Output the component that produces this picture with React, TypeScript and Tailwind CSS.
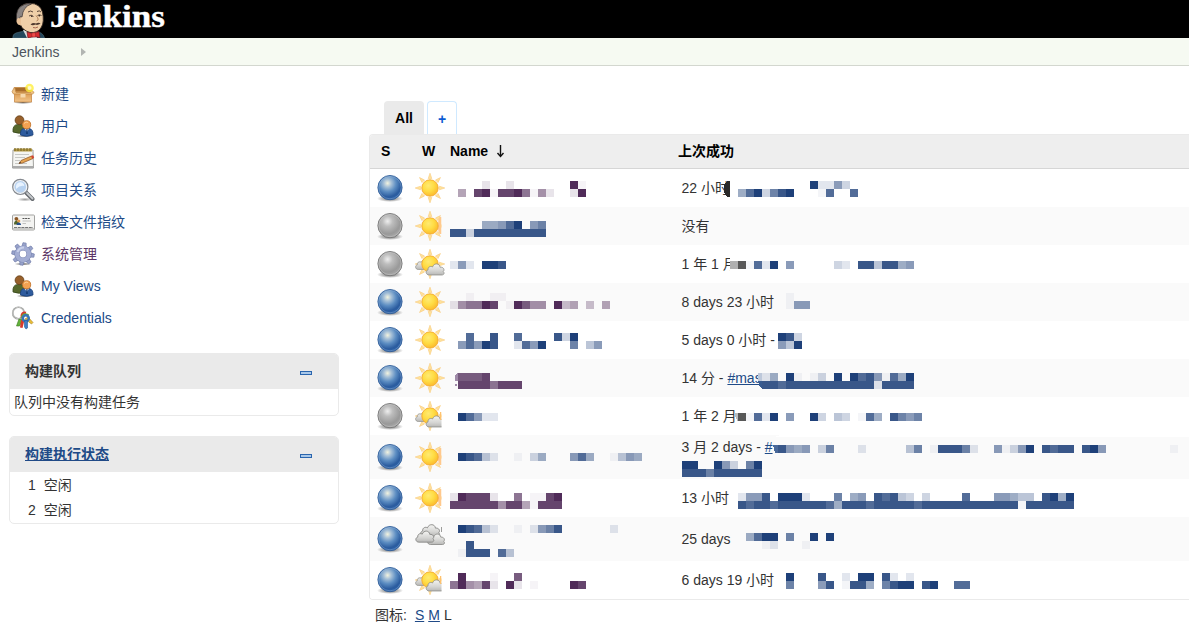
import React from "react";

const BLUE = "#1e4079";
const PURPLE = "#502b59";
const LEVELS = [0.05, 0.13, 0.22, 0.3, 0.43, 0.52, 0.65, 0.77, 0.88, 1];

type Line = [number, string];

/* Obscured text: every character of a line is one 8px block, 0 (faint) to 9 (solid). */
function Mosaic({ lines, color = BLUE, children }: { lines: Line[]; color?: string; children?: React.ReactNode }) {
  return (
    <svg className="pointer-events-none absolute left-0 top-0 overflow-visible" width="500" height="38" shapeRendering="crispEdges">
      {children}
      {lines.map(([y, s], n) =>
        s.split("").map((c, i) => {
          if (c === ".") return null;
          const gray = c === "g" ? "#b0b0b0" : c === "h" ? "#585858" : null;
          return (
            <rect key={n + "-" + i} x={i * 8} y={y} width="8" height="8" fill={gray ?? color} fillOpacity={gray ? 1 : LEVELS[Number(c)]} />
          );
        })
      )}
    </svg>
  );
}

function Defs() {
  return (
    <svg width="0" height="0" className="absolute">
      <defs>
        <radialGradient id="blueBall" cx="0.4" cy="0.32" r="0.7">
          <stop offset="0" stopColor="#f2f3df" />
          <stop offset="0.22" stopColor="#a9c2d8" />
          <stop offset="0.5" stopColor="#5c8dc2" />
          <stop offset="0.8" stopColor="#2b5c9f" />
          <stop offset="1" stopColor="#2c62a8" />
        </radialGradient>
        <radialGradient id="grayBall" cx="0.4" cy="0.32" r="0.7">
          <stop offset="0" stopColor="#eeeeee" />
          <stop offset="0.3" stopColor="#bdbdbd" />
          <stop offset="0.75" stopColor="#999999" />
          <stop offset="1" stopColor="#aaaaaa" />
        </radialGradient>
        <radialGradient id="sun" cx="0.4" cy="0.35" r="0.7">
          <stop offset="0" stopColor="#ffea72" />
          <stop offset="0.5" stopColor="#ffdc43" />
          <stop offset="1" stopColor="#fbb52a" />
        </radialGradient>
        <linearGradient id="cloud" x1="0" y1="0" x2="0" y2="1">
          <stop offset="0" stopColor="#f4f4f2" />
          <stop offset="0.6" stopColor="#d5d5d3" />
          <stop offset="1" stopColor="#b8b8b6" />
        </linearGradient>
        <linearGradient id="box" x1="0" y1="0" x2="0" y2="1">
          <stop offset="0" stopColor="#d59245" />
          <stop offset="1" stopColor="#f2c48a" />
        </linearGradient>
        <radialGradient id="shade">
          <stop offset="0" stopColor="#000" stopOpacity="0.65" />
          <stop offset="1" stopColor="#000" stopOpacity="0" />
        </radialGradient>
        <clipPath id="cut">
          <rect x="0" y="0" width="27.5" height="32" />
        </clipPath>
      </defs>
    </svg>
  );
}

function Ball({ gray }: { gray?: boolean }) {
  return (
    <svg width="32" height="32" viewBox="0 0 32 32" className="block">
      <ellipse cx="16" cy="26.6" rx="13" ry="3.4" fill="url(#shade)" />
      <circle cx="16" cy="15.6" r="12.1" fill={gray ? "url(#grayBall)" : "url(#blueBall)"} stroke={gray ? "#747474" : "#315f9a"} strokeWidth="0.9" />
      <circle cx="16" cy="15.6" r="11.2" fill="none" stroke={gray ? "#d8d8d8" : "#a9c4e2"} strokeOpacity="0.5" strokeWidth="0.7" />
    </svg>
  );
}

const CLOUD = "M3.5 11C.2 11-.4 6.900 2.400 6.200C2 3.200 5.200 2.200 6.600 3.500C8-.6 13.400-.2 13.800 3.700C17 3.200 18.400 6.300 16.700 7.800C18.500 9.500 17 11 15.500 11Z";

function Weather({ kind }: { kind: string }) {
  const cut = kind === "sunCut" || kind === "partlyCut";
  if (kind === "cloudy")
    return (
      <svg width="32" height="32" viewBox="0 0 32 32" className="block" fill="url(#cloud)" stroke="#858583" strokeWidth="0.8">
        <path d={CLOUD} transform="translate(6 1) scale(1.12)" />
        <path d={CLOUD} transform="translate(13 10.500) scale(1)" />
        <path d={CLOUD} transform="translate(1.200 7.500) scale(1.06)" />
        <path d="M27.500 4V9" fill="none" />
      </svg>
    );
  return (
    <svg width="32" height="32" viewBox="0 0 32 32" className="block">
      <g clipPath={cut ? "url(#cut)" : undefined}>
        {[0, 45, 90, 135, 180, 225, 270, 315].map((a) => (
          <path key={a} d="M14.200 6.500L16 1.200L17.800 6.500Z" fill="#ffe29a" stroke="#f8cb80" strokeWidth="0.6" transform={`rotate(${a} 16 16)`} />
        ))}
        {kind === "sunCut" && <path d="M27.500 7H25.500Q22 16 25.500 24H27.500Z" fill="#ffc98d" />}
        {kind.startsWith("partly") && <path d={CLOUD} transform="translate(1 11) scale(0.95)" fill="url(#cloud)" stroke="#92928e" strokeWidth="0.8" />}
        <circle cx="16" cy="16" r="8.200" fill="url(#sun)" stroke="#f4a92c" strokeWidth="0.9" />
        {kind.startsWith("partly") && <path d={CLOUD} transform="translate(11.500 15.300) scale(1.06)" fill="url(#cloud)" stroke="#92928e" strokeWidth="0.8" />}
        {kind === "partlyCut" && <path d="M26 12H27.500V20H26Z" fill="#ffc26e" />}
      </g>
    </svg>
  );
}

function SideIcon({ name }: { name: string }) {
  return (
    <svg width="24" height="24" viewBox="0 0 24 24" className="block shrink-0">
      {name === "box" && (
        <>
          <ellipse cx="12" cy="20.500" rx="10" ry="1.500" fill="url(#shade)" />
          <path d="M3.500 9H20.500V20H3.500Z" fill="url(#box)" stroke="#c98a47" strokeWidth="0.8" />
          <path d="M4 5.500H18.500L20.500 9.500H3.500Z" fill="#a96d2c" stroke="#c58a45" strokeWidth="0.8" />
          <path d="M3.500 5L1 9.800L2.500 12H21.500L23.200 10.500L20.500 8L19.500 10.500H5Z" fill="#efc386" stroke="#c08544" strokeWidth="0.7" />
          <rect x="9.500" y="12" width="5" height="3.500" fill="#f6d9ae" />
          <circle cx="18.500" cy="6" r="4.300" fill="#ffef3c" fillOpacity="0.8" />
          <circle cx="18.500" cy="6" r="2" fill="#fffbd0" />
        </>
      )}
      {name === "users" && (
        <>
          <ellipse cx="14" cy="22" rx="9" ry="1.500" fill="url(#shade)" />
          <path d="M2 18Q1.300 11 6.500 10.500H10Q14.500 11 14.500 18Q8 20.500 2 18Z" fill="#56672c" stroke="#35461c" strokeWidth="0.8" />
          <circle cx="8.500" cy="6.200" r="4.400" fill="#98602b" stroke="#654019" strokeWidth="0.8" />
          <path d="M9.500 21Q9 15 13 14.500H18Q22.300 15 22 21Q15.500 23.500 9.500 21Z" fill="#2f5c9e" stroke="#183f78" strokeWidth="0.8" />
          <path d="M13.500 14.500H18L16 18Z" fill="#fff" />
          <path d="M15.300 15H16.500L17 20H15Z" fill="#183f78" />
          <circle cx="15.600" cy="10.800" r="4.100" fill="#f3a252" stroke="#bf6b20" strokeWidth="0.8" />
          <path d="M13 9.500Q15 7 17 8.500" stroke="#ffd096" fill="none" />
        </>
      )}
      {name === "note" && (
        <>
          <path d="M2 4H22L22.500 22H1.500Z" fill="#f5f5f2" stroke="#8b8c87" strokeWidth="0.8" />
          <path d="M1.500 20H22.500V22.200H1.500Z" fill="#aaa" />
          <rect x="3" y="2.500" width="18" height="3" fill="#b59a43" />
          <path d="M4 2V5M7 2V5M10 2V5M13 2V5M16 2V5M19 2V5" stroke="#716026" />
          <path d="M4 8.500H18M4 11.500H14M4 14.500H9M4 17.500H16" stroke="#bbbdb9" strokeWidth="0.8" />
          <path d="M8 17.500L10 14.500L20.500 10L22 12.500L11.500 17Z" fill="#e5a451" stroke="#8b4d20" strokeWidth="0.7" />
          <path d="M20 10L22 9.300L23.200 11.500L21.500 12.700Z" fill="#d44331" />
          <path d="M8 17.500L9 16L10 16.800Z" fill="#222" />
        </>
      )}
      {name === "search" && (
        <>
          <ellipse cx="14" cy="21.500" rx="8" ry="2" fill="url(#shade)" fillOpacity="0.6" />
          <path d="M15 14.500L21.500 21" stroke="#676b70" strokeWidth="4" strokeLinecap="round" />
          <path d="M16 15L21.500 20.500" stroke="#c6c9cc" strokeWidth="1.800" strokeLinecap="round" />
          <circle cx="9.300" cy="8.900" r="7.200" fill="#b8d2f0" stroke="#85898f" strokeWidth="2" />
          <circle cx="9.300" cy="8.900" r="6.400" fill="none" stroke="#f0f4f9" strokeWidth="1.200" />
          <path d="M5 8Q6 3.800 10 4.300Q13 5 13.300 8Q9 7 5 11Z" fill="#e8f3ff" />
        </>
      )}
      {name === "card" && (
        <>
          <rect x="1.500" y="5" width="22" height="15" rx="1" fill="#f4f4f2" stroke="#a2a2a0" />
          <path d="M3 17.500H22" stroke="#777" strokeDasharray="3 0.700" />
          <rect x="2" y="18" width="21" height="1.700" fill="#c9c9c7" />
          <circle cx="5.400" cy="8.800" r="1.900" fill="#8b5726" />
          <path d="M3 14Q3 10.500 6 10.500L9.500 14.500H3Z" fill="#53652c" />
          <circle cx="7.700" cy="11" r="1.600" fill="#e59b4a" />
          <path d="M5.500 15Q5.500 12.500 7.500 12.500Q10 12.500 10 15Z" fill="#28518e" />
          <path d="M11.500 8.500H19" stroke="#555" strokeDasharray="2 0.600" />
          <path d="M11.500 11H20M11.500 13.500H15" stroke="#aaa" strokeWidth="0.700" />
        </>
      )}
      {name === "gear" && (
        <>
          <ellipse cx="12" cy="22" rx="9" ry="1.500" fill="url(#shade)" />
          {[8, 53, 98, 143, 188, 233, 278, 323].map((a) => (
            <path key={a} d="M9.800 5.500L10.400 .8H13.600L14.200 5.500Z" fill="#98a3cb" stroke="#7480ac" strokeWidth="0.7" transform={`rotate(${a} 12 12)`} />
          ))}
          <circle cx="12" cy="12" r="6" fill="none" stroke="#7480ac" strokeWidth="5.200" />
          <circle cx="12" cy="12" r="6" fill="none" stroke="#a3add3" strokeWidth="4.300" />
          <path d="M6.500 10Q8 5.500 13 5.500" stroke="#c8d0ea" strokeWidth="2" fill="none" />
        </>
      )}
      {name === "keys" && (
        <>
          <circle cx="7.500" cy="7" r="5.800" fill="none" stroke="#8c8e8c" strokeWidth="1.600" />
          <circle cx="7.500" cy="7" r="5.800" fill="none" stroke="#eeeeec" strokeWidth="0.600" />
          <path d="M17 11L22 16.500L20.500 18L14 13Z" fill="#e9bf38" stroke="#a87d19" strokeWidth="0.6" />
          <path d="M8 13L5.500 20H8.500L12 13.500Z" fill="#63b33b" stroke="#39791d" strokeWidth="0.6" />
          <path d="M10 14L9 21.500L11.500 22L13.500 14Z" fill="#d83a2d" />
          <path d="M11 12Q10 6 15 7" stroke="#d43b2f" strokeWidth="2.800" fill="none" />
          <path d="M11 12Q12 6.500 17.500 9.500" stroke="#66b436" strokeWidth="2.500" fill="none" />
          <circle cx="14.800" cy="12.200" r="3" fill="none" stroke="#3975b9" strokeWidth="2.500" />
          <path d="M13.500 14.500H16.500V22L15 23L13.500 21Z" fill="#3d7fc5" stroke="#275b99" strokeWidth="0.6" />
        </>
      )}
    </svg>
  );
}

function Butler() {
  return (
    <svg width="34" height="38" viewBox="0 0 34 38" className="block shrink-0">
      <path d="M.8 38Q.5 34 4 33L12 31L24 31.500Q31 32 32.500 38Z" fill="#24485c" stroke="#4f6b79" strokeWidth="0.6" />
      <path d="M11 30L15 38H25L25 30Z" fill="#d9dcdc" />
      <path d="M5.500 15Q6 3.500 18 3.300Q28 3.500 30.500 12Q32.500 22 29.500 27Q26 33.500 18 32.500Q11 30.500 8.500 25Q4.500 24 4.800 19Z" fill="#efcfa8" stroke="#33271f" strokeWidth="0.9" />
      <path d="M4.500 20Q3.200 7.500 12.500 4.500Q16 3 19.500 4Q11 6.500 10 17L8.300 16.500L7.300 20Z" fill="#8a8482" stroke="#393230" strokeWidth="0.7" />
      <path d="M6 18Q3 21 6 24.500L9 25.500V18.500Z" fill="#e9c298" />
      <path d="M16 12Q18.500 10 21 12M25 11.500Q27.500 10 29 12" stroke="#49372d" strokeWidth="0.9" fill="none" />
      <path d="M17 16Q19 14 21.500 16.500M25.500 15.500Q27 14 29.500 15.500" stroke="#3c2f27" strokeWidth="0.8" fill="none" />
      <circle cx="19.800" cy="16.300" r="0.800" fill="#221111" />
      <circle cx="27.300" cy="15.700" r="0.800" fill="#221111" />
      <path d="M24 15.500Q28 20 24.500 21" stroke="#a9774f" strokeWidth="0.9" fill="none" />
      <path d="M18.500 24.500Q21 22.300 24 23.500Q27 22 28.500 23.800Q25.500 25.500 23.500 24.600Q20.500 26 18.500 24.500Z" fill="#4d382e" />
      <path d="M21 27.500Q23.500 28.500 26 27" stroke="#9e5a45" strokeWidth="0.9" fill="none" />
      <path d="M15 32L20.500 33.500L27 31.500L28 37.500L22 36.500L16 38Z" fill="#d72c30" stroke="#71151b" strokeWidth="0.7" />
      <rect x="19.800" y="32.800" width="3.800" height="4.200" rx="1" fill="#ef4b48" stroke="#8e1d20" strokeWidth="0.500" />
    </svg>
  );
}

const MENU = [
  ["box", "新建"],
  ["users", "用户"],
  ["note", "任务历史"],
  ["search", "项目关系"],
  ["card", "检查文件指纹"],
  ["gear", "系统管理"],
  ["users", "My Views"],
  ["keys", "Credentials"],
];

type Job = { gray?: boolean; w: string; tall?: boolean; purple?: boolean; name: Line[]; text: React.ReactNode; last: Line[]; extra?: React.ReactNode; nameExtra?: React.ReactNode };

const dots = (n: number) => ".".repeat(n);
const bar = (n: number) => "8".repeat(n);

const JOBS: Job[] = [
  {
    w: "sun", purple: true,
    name: [[12, "....1..1.......90"], [20, ".4.8908896051..19"]],
    text: "22 小时",
    last: [[12, dots(16) + "91152"], [20, ".......4792689...07..7"]],
    extra: <path d="M48 12H46Q42 14 42 20Q42 26 46 28H48Z" fill="#292929" />,
  },
  { gray: true, w: "sunCut", name: [[14, "....44579.56"], [22, "882888888888"]], text: "没有", last: [] },
  {
    gray: true, w: "partly", name: [[16, "151.998"]], text: "1 年 1 月",
    last: [[16, "......gh0719.5.....21.8838845"]],
    extra: <rect x="48" y="9" width="10" height="20" fill="#fff" />,
  },
  {
    w: "sun", purple: true, name: [[10, "..0..00"], [18, "156698.09755.934.3.4"]],
    text: "8 days 23 小时", last: [[10, dots(13) + "0"], [18, dots(13) + "055"]],
  },
  {
    w: "sun", name: [[12, "..7..8..7....829"], [20, ".57598..1759...6.35"]],
    text: "5 days 0 小时 -", last: [[12, dots(12) + "982"], [20, dots(12) + "539"]],
  },
  {
    w: "sun", purple: true, name: [[14, ".7778"], [22, ".88886888"]],
    nameExtra: <path d="M8 14Q4 15 5 22H8ZM5 25H7V27H5Z" fill="#9f8aa8" />,
    text: <>14 分 - <a className="text-[#204a87] underline">#mas</a></>,
    last: [[14, dots(10) + "14.90.02.9.97850749"], [22, dots(10) + "8878888888888818888"]],
    extra: (
      <>
        <path d="M78 14H150V30H82L76 22Z" fill="#fafafa" />
        <path d="M76 22H80V30Q77 27 76 22Z" fill="#385b90" />
        <path d="M76 14H80V22H76Z" fill="#bdc8da" />
      </>
    ),
  },
  {
    gray: true, w: "partlyCut", name: [[16, ".97511"]], text: "1 年 2 月",
    last: [[16, ".......h0719.5..92.32.074.8656"]],
    extra: <path d="M53 16H56V24Q53 22 53 16Z" fill="#bbb" />,
  },
  {
    w: "sunCut", tall: true, name: [[18, ".98731..0.24...574..0354"]],
    text: <>3 月 2 days - <a className="text-[#204a87] underline">#</a></>,
    last: [[10, dots(12) + "8545.26...1.....36.088861..50259.8788.895" + dots(8) + "0"], [26, "99..952.69"], [34, "8886888888"]],
    extra: (
      <>
        <path d="M91 10H96V18H93Z" fill="#49699a" />
        <path d="M98 0H507V2H93Z" fill="#ffffff" />
      </>
    ),
  },
  {
    w: "sunCut", purple: true, name: [[14, "198881..6.0089"], [22, "88888858840888"]], text: "13 小时",
    last: [
      [14, ".......1558.9991...6.45.87832.2....7...55433.8949"],
      [22, dots(7) + "87887" + bar(6) + "74" + bar(3) + "7" + bar(5) + "7" + bar(12) + "0" + bar(6)],
    ],
  },
  {
    w: "cloudy", tall: true, name: [[8, ".98731..0.1568......1"], [24, "..8"], [32, ".0888.73"]],
    text: "25 days", last: [[16, dots(8) + "4799.6..9.9"], [24, dots(10) + "01...0"]],
  },
  {
    w: "partlyCut", purple: true, name: [[12, ".9...0..7"], [20, "695481.91.0....98"]],
    text: "6 days 19 小时",
    last: [[12, dots(13) + "9...8..1.99.81.1"], [20, dots(13) + "6...58.0884.6899.89..77"]],
  },
];

function Pane({ title, link, children }: { title: string; link?: boolean; children: React.ReactNode }) {
  return (
    <section className="overflow-hidden rounded-[5px] border border-[#eaeaea]">
      <header className="flex h-[35px] items-center justify-between bg-[#eaeaea] pb-px pl-[15px] pr-[26px] font-bold">
        <span className={link ? "text-[#204a87] underline" : ""}>{title}</span>
        <span className="mt-1 block h-1 w-3 border border-[#2a65ae] bg-[#a9c8e9]" />
      </header>
      {children}
    </section>
  );
}

export default function App() {
  return (
    <div className="flex h-[633px] w-[1189px] flex-col overflow-hidden bg-white font-['Liberation_Sans','Noto_Sans_CJK_SC',sans-serif] text-[14px] leading-5 text-[#333]">
      <Defs />
      <header className="flex h-[38px] shrink-0 items-start bg-black pl-3">
        <Butler />
        <span className="ml-1 origin-left scale-x-[1.13] font-['Liberation_Serif',serif] text-[31px] font-bold leading-[34px] text-white [-webkit-text-stroke:0.4px_white]">Jenkins</span>
      </header>
      <nav className="flex h-7 shrink-0 items-center border-b border-[#d3d7cf] bg-[#f6faf2] pl-3 text-[#4d545d]">
        <span>Jenkins</span>
        <svg width="5" height="8" viewBox="0 0 5 8" className="ml-[22px]">
          <path d="M0 0L5 4L0 8Z" fill="#b2b5b2" />
        </svg>
      </nav>
      <div className="flex min-h-0 flex-1">
        <aside className="w-[369px] shrink-0 pl-[9px] pr-[30px] pt-3">
          <ul className="flex flex-col pl-0.5">
            {MENU.map(([icon, label]) => (
              <li key={label} className="flex h-8 items-center gap-1.5">
                <SideIcon name={icon} />
                <a className={icon === "gear" ? "text-[#5c3566]" : "text-[#204a87]"}>{label}</a>
              </li>
            ))}
          </ul>
          <div className="flex flex-col gap-5 pt-[19px]">
            <Pane title="构建队列">
              <div className="h-[26px] px-1 leading-[27px]">队列中没有构建任务</div>
            </Pane>
            <Pane title="构建执行状态" link>
              <div className="h-[51px] pl-[18px] pt-px leading-[25px]">
                <div className="flex gap-2"><span>1</span><span>空闲</span></div>
                <div className="flex gap-2"><span>2</span><span>空闲</span></div>
              </div>
            </Pane>
          </div>
        </aside>
        <main className="min-w-0 flex-1 pt-[35px]">
          <div className="flex h-[33px] gap-[3px] pl-[15px] font-bold">
            <div className="flex w-10 items-center justify-center rounded-t-[4px] bg-[#eaeaea] text-black">All</div>
            <div className="flex w-[30px] items-center justify-center rounded-t-[4px] border border-b-0 border-[#cfe9ff] pt-0.5 text-[#0b5bd3]">+</div>
          </div>
          <div className="overflow-hidden rounded-l-[4px] border border-r-0 border-[#eaeaea]">
            <div className="flex h-[34px] items-center border-b border-[#d6d6d6] bg-[#eeeeee] pb-0.5 font-bold text-black">
              <span className="w-[40px] pl-[11px]">S</span>
              <span className="w-[40px] pl-[12px]">W</span>
              <span className="flex w-[228px] items-center gap-2">
                Name
                <svg width="9" height="14" viewBox="0 0 9 14" fill="none" stroke="#111" strokeWidth="1.400">
                  <path d="M4.500 1V12" />
                  <path d="M1.500 9L4.500 12.500L7.500 9" />
                </svg>
              </span>
              <span>上次成功</span>
            </div>
            {JOBS.map((j, i) => (
              <div key={i} className={`flex ${j.tall ? "h-11" : "h-[38px]"} ${i % 2 ? "bg-[#fafafa]" : "bg-white"}`}>
                <div className="flex w-[40px] items-center pl-1"><Ball gray={j.gray} /></div>
                <div className="flex w-[40px] items-center pl-1"><Weather kind={j.w} /></div>
                <div className="relative w-[232px]">
                  <Mosaic lines={j.name} color={j.purple ? PURPLE : BLUE}>{j.nameExtra}</Mosaic>
                </div>
                <div className={`relative flex-1 ${i === 7 ? "pt-0.5" : j.tall ? "pt-3" : "pt-[9px]"}`}>
                  <span className="-ml-[0.5px]">{j.text}</span>
                  <Mosaic lines={j.last}>{j.extra}</Mosaic>
                </div>
              </div>
            ))}
          </div>
          <div className="flex gap-1 pl-[6px] pt-[5px]">
            <span className="mr-1">图标:</span>
            <a className="text-[#204a87] underline">S</a>
            <a className="text-[#204a87] underline">M</a>
            <span>L</span>
          </div>
        </main>
      </div>
    </div>
  );
}
